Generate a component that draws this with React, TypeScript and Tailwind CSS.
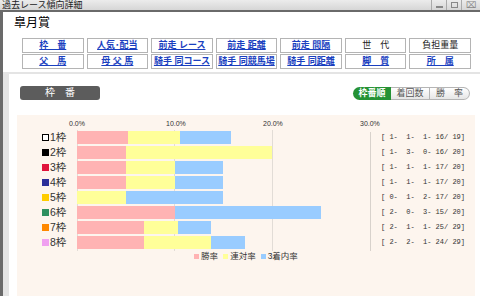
import React from 'react'

const font = '"Liberation Sans", "Noto Sans CJK JP", sans-serif'

const navRows = [
  [
    { label: '枠　番', link: true },
    { label: '人気･配当', link: true },
    { label: '前走 レース', link: true },
    { label: '前走 距離', link: true },
    { label: '前走 間隔', link: true },
    { label: '世　代', link: false },
    { label: '負担重量', link: false },
  ],
  [
    { label: '父　馬', link: true },
    { label: '母 父 馬', link: true },
    { label: '騎手 同コース', link: true },
    { label: '騎手 同競馬場', link: true },
    { label: '騎手 同距離', link: true },
    { label: '脚　質', link: true },
    { label: '所　属', link: true },
  ],
]

// [1着, 2着, 3着, 着外, 計]
const rows = [
  { name: '1枠', color: 'bg-white border border-black', r: [1, 1, 1, 16, 19] },
  { name: '2枠', color: 'bg-black', r: [1, 3, 0, 16, 20] },
  { name: '3枠', color: 'bg-[#e0143c]', r: [1, 1, 1, 17, 20] },
  { name: '4枠', color: 'bg-[#2b2f99]', r: [1, 1, 1, 17, 20] },
  { name: '5枠', color: 'bg-[#ffcc00]', r: [0, 1, 2, 17, 20] },
  { name: '6枠', color: 'bg-[#2e9060]', r: [2, 0, 3, 15, 20] },
  { name: '7枠', color: 'bg-[#ff8800]', r: [2, 1, 1, 25, 29] },
  { name: '8枠', color: 'bg-[#f0a0f0]', r: [2, 2, 1, 24, 29] },
]

const PX_PER_PCT = 9.75

function pad(n: number, w: number) {
  return String(n).padStart(w, ' ')
}

export default function App() {
  return (
    <div className="w-[480px] h-[296px] overflow-hidden bg-white flex flex-col" style={{ fontFamily: font }}>
      {/* title bar */}
      <div className="h-[12px] flex items-center justify-between bg-gradient-to-b from-[#ececec] to-[#d6d6d6] border-b-2 border-[#6a6a6a]">
        <span className="pl-[2px] text-[9px] leading-none text-[#222]">過去レース傾向詳細</span>
        <div className="flex h-full items-stretch">
          <div className="w-[15px] border-l border-[#aaa] flex items-end justify-center pb-[2px]">
            <div className="w-[7px] h-[2px] bg-[#888]" />
          </div>
          <div className="w-[15px] border-l border-[#aaa] flex items-center justify-center">
            <div className="w-[7px] h-[6px] border border-[#888]" />
          </div>
          <div className="w-[19px] border-l border-[#aaa] flex items-center justify-center text-[9px] leading-none text-[#888]">⌧</div>
        </div>
      </div>

      <div className="flex-1 border-l-[3px] border-[#6a6a6a] flex flex-col">
        <div className="pl-[11px] pt-[4px] text-[12px] leading-[14px] text-black">皐月賞</div>

        {/* nav buttons */}
        <div className="mt-[8px] ml-[19px] w-[449px] flex flex-col gap-[1px]">
          {navRows.map((row, i) => (
            <div key={i} className="grid grid-cols-7 gap-x-[3px]">
              {row.map((b) => (
                <div
                  key={b.label}
                  className="h-[15px] border border-[#b4b4b4] bg-white flex items-center justify-center text-[9px] leading-none whitespace-pre"
                >
                  {b.link ? (
                    <span className="text-[#1a3fbf] underline font-bold">{b.label}</span>
                  ) : (
                    <span className="text-[#222]">{b.label}</span>
                  )}
                </div>
              ))}
            </div>
          ))}
        </div>

        {/* content area */}
        <div className="mt-[3px] flex-1 bg-[#e4e4e4] pt-[2px] pl-[6px] flex flex-col">
          <div className="flex-1 bg-white pl-[8px] flex flex-col">
            <div className="mt-[12px] flex items-center justify-between pr-[10px] pl-[3px]">
              <div className="w-[80px] h-[14px] rounded-[3px] bg-[#5c5c5c] flex items-center justify-center text-white text-[10px] leading-none whitespace-pre">
                枠　番
              </div>
              <div className="flex h-[13px] text-[9px] leading-none">
                <div className="w-[38px] rounded-l-full bg-[#259235] text-white font-bold flex items-center justify-center">枠番順</div>
                <div className="w-[39px] border border-l-0 border-[#b5b5b5] bg-gradient-to-b from-white to-[#e6e6e6] text-[#555] flex items-center justify-center">着回数</div>
                <div className="w-[40px] rounded-r-full border border-l-0 border-[#b5b5b5] bg-gradient-to-b from-white to-[#e6e6e6] text-[#555] flex items-center justify-center whitespace-pre">勝　率</div>
              </div>
            </div>

            {/* chart panel */}
            <div className="mt-[15px] mr-[5px] flex-1 bg-[#fdf5ee] flex flex-col">
              <div className="relative h-[15px] text-[7px] leading-none text-[#333]">
                <span className="absolute top-[5px] left-[52px]">0.0%</span>
                <span className="absolute top-[5px] left-[149px]">10.0%</span>
                <span className="absolute top-[5px] left-[246px]">20.0%</span>
                <span className="absolute top-[5px] left-[343px]">30.0%</span>
              </div>
              <div className="relative pt-[1px] pb-[2px]">
                <div className="absolute top-0 bottom-0 left-[60px] w-px bg-[#e2dcd6]" />
                <div className="absolute top-0 bottom-0 left-[157px] w-px bg-[#e2dcd6]" />
                <div className="absolute top-0 bottom-0 left-[255px] w-px bg-[#e2dcd6]" />
                <div className="absolute top-[2px] bottom-0 left-[353px] w-px bg-[#d8d2cc]" />
                <div className="flex flex-col gap-[2px]">
                  {rows.map((row) => {
                    const [a, b, c, , n] = row.r
                    const win = (a / n) * 100
                    const ren = ((a + b) / n) * 100
                    const fuku = ((a + b + c) / n) * 100
                    return (
                      <div key={row.name} className="flex h-[13px] items-center">
                        <div className="w-[60px] pl-[25px] flex items-center gap-[1px]">
                          <div className={`w-[7px] h-[7px] ${row.color}`} />
                          <span className="text-[10.5px] leading-none text-[#333]">{row.name}</span>
                        </div>
                        <div className="relative w-[293px] h-full">
                          <div className="absolute top-0 left-0 h-full bg-[#99ccff]" style={{ width: fuku * PX_PER_PCT }} />
                          <div className="absolute top-0 left-0 h-full bg-[#ffff99]" style={{ width: ren * PX_PER_PCT }} />
                          <div className="absolute top-0 left-0 h-full bg-[#ffb3b3]" style={{ width: win * PX_PER_PCT }} />
                        </div>
                        <div
                          className="pl-[11px] text-[7px] leading-none text-[#333] whitespace-pre"
                          style={{ fontFamily: '"Liberation Mono", monospace' }}
                        >
                          {`[${pad(a, 2)}-${pad(b, 3)}-${pad(c, 3)}-${pad(row.r[3], 3)}/${pad(n, 3)}]`}
                        </div>
                      </div>
                    )
                  })}
                </div>
              </div>
              <div className="mt-[1px] flex items-center justify-center gap-[2px] text-[8.5px] leading-none text-[#333]">
                <div className="w-[5px] h-[5px] bg-[#ffb3b3]" />
                <span>勝率</span>
                <div className="ml-[3px] w-[5px] h-[5px] bg-[#ffff99]" />
                <span>連対率</span>
                <div className="ml-[3px] w-[5px] h-[5px] bg-[#99ccff]" />
                <span>3着内率</span>
              </div>
            </div>
          </div>
        </div>
      </div>
    </div>
  )
}
